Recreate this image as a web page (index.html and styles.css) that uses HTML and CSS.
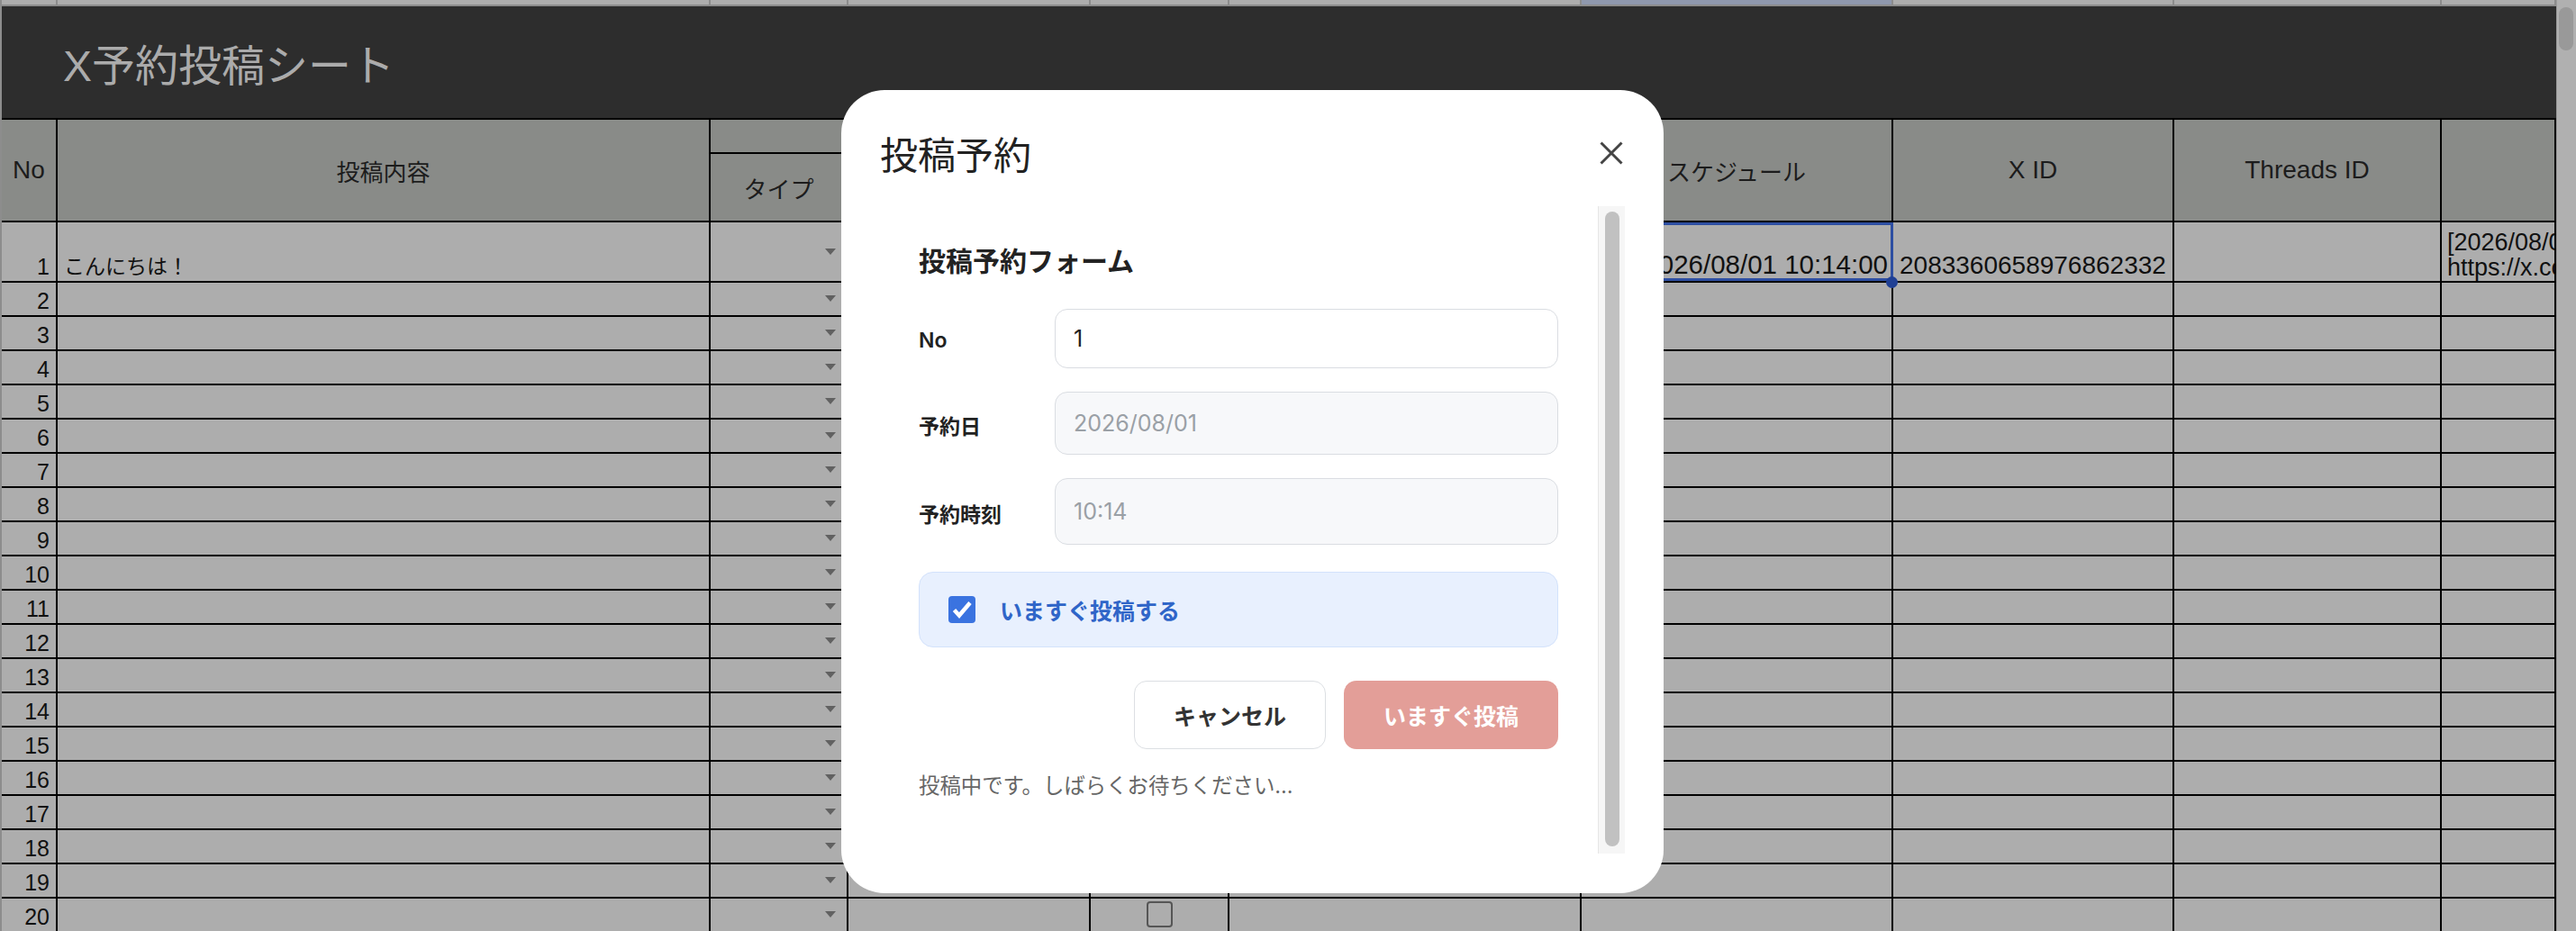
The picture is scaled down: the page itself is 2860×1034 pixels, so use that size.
FILE: index.html
```html
<!DOCTYPE html>
<html lang="ja">
<head>
    <meta charset="UTF-8">
    <meta name="viewport" content="width=device-width, initial-scale=1.0">
    <title>X予約投稿シート</title>
    <link rel="stylesheet" href="styles.css">
</head>
<body>
    <div class="app">
        <div class="sheet">
            <div class="strip grid">
                <span></span><span></span><span></span><span></span><span></span><span></span><span class="sel"></span><span></span><span></span><span></span>
            </div>
            <div class="titlebar">X予約投稿シート</div>

            <div class="head grid">
                <span class="h no">No</span>
                <span class="h body"><b class="ja">投稿内容</b></span>
                <span class="h group"></span>
                <span class="h type"><b class="ja">タイプ</b></span>
                <span class="h sub"></span>
                <span class="h c5"></span>
                <span class="h c6"></span>
                <span class="h c7"><b class="ja">スケジュール</b></span>
                <span class="h c8">X ID</span>
                <span class="h c9">Threads ID</span>
                <span class="h c10"></span>
            </div>

            <div class="row grid first">
                <span class="c num">1</span>
                <span class="c text"><b class="ja-s">こんにちは！</b></span>
                <span class="c type"><i class="dd"></i></span>
                <span class="c"></span>
                <span class="c chk"><i class="box"></i></span>
                <span class="c"></span>
                <span class="c date selected">2026/08/01 10:14:00</span>
                <span class="c text">2083360658976862332</span>
                <span class="c"></span>
                <span class="c log">[2026/08/01<br>https://x.com</span>
            </div>
            <div class="row grid"><span class="c num">2</span><span class="c"></span><span class="c type"><i class="dd"></i></span><span class="c"></span><span class="c chk"><i class="box"></i></span><span class="c"></span><span class="c"></span><span class="c"></span><span class="c"></span><span class="c"></span></div>
            <div class="row grid"><span class="c num">3</span><span class="c"></span><span class="c type"><i class="dd"></i></span><span class="c"></span><span class="c chk"><i class="box"></i></span><span class="c"></span><span class="c"></span><span class="c"></span><span class="c"></span><span class="c"></span></div>
            <div class="row grid"><span class="c num">4</span><span class="c"></span><span class="c type"><i class="dd"></i></span><span class="c"></span><span class="c chk"><i class="box"></i></span><span class="c"></span><span class="c"></span><span class="c"></span><span class="c"></span><span class="c"></span></div>
            <div class="row grid"><span class="c num">5</span><span class="c"></span><span class="c type"><i class="dd"></i></span><span class="c"></span><span class="c chk"><i class="box"></i></span><span class="c"></span><span class="c"></span><span class="c"></span><span class="c"></span><span class="c"></span></div>
            <div class="row grid"><span class="c num">6</span><span class="c"></span><span class="c type"><i class="dd"></i></span><span class="c"></span><span class="c chk"><i class="box"></i></span><span class="c"></span><span class="c"></span><span class="c"></span><span class="c"></span><span class="c"></span></div>
            <div class="row grid"><span class="c num">7</span><span class="c"></span><span class="c type"><i class="dd"></i></span><span class="c"></span><span class="c chk"><i class="box"></i></span><span class="c"></span><span class="c"></span><span class="c"></span><span class="c"></span><span class="c"></span></div>
            <div class="row grid"><span class="c num">8</span><span class="c"></span><span class="c type"><i class="dd"></i></span><span class="c"></span><span class="c chk"><i class="box"></i></span><span class="c"></span><span class="c"></span><span class="c"></span><span class="c"></span><span class="c"></span></div>
            <div class="row grid"><span class="c num">9</span><span class="c"></span><span class="c type"><i class="dd"></i></span><span class="c"></span><span class="c chk"><i class="box"></i></span><span class="c"></span><span class="c"></span><span class="c"></span><span class="c"></span><span class="c"></span></div>
            <div class="row grid"><span class="c num">10</span><span class="c"></span><span class="c type"><i class="dd"></i></span><span class="c"></span><span class="c chk"><i class="box"></i></span><span class="c"></span><span class="c"></span><span class="c"></span><span class="c"></span><span class="c"></span></div>
            <div class="row grid"><span class="c num">11</span><span class="c"></span><span class="c type"><i class="dd"></i></span><span class="c"></span><span class="c chk"><i class="box"></i></span><span class="c"></span><span class="c"></span><span class="c"></span><span class="c"></span><span class="c"></span></div>
            <div class="row grid"><span class="c num">12</span><span class="c"></span><span class="c type"><i class="dd"></i></span><span class="c"></span><span class="c chk"><i class="box"></i></span><span class="c"></span><span class="c"></span><span class="c"></span><span class="c"></span><span class="c"></span></div>
            <div class="row grid"><span class="c num">13</span><span class="c"></span><span class="c type"><i class="dd"></i></span><span class="c"></span><span class="c chk"><i class="box"></i></span><span class="c"></span><span class="c"></span><span class="c"></span><span class="c"></span><span class="c"></span></div>
            <div class="row grid"><span class="c num">14</span><span class="c"></span><span class="c type"><i class="dd"></i></span><span class="c"></span><span class="c chk"><i class="box"></i></span><span class="c"></span><span class="c"></span><span class="c"></span><span class="c"></span><span class="c"></span></div>
            <div class="row grid"><span class="c num">15</span><span class="c"></span><span class="c type"><i class="dd"></i></span><span class="c"></span><span class="c chk"><i class="box"></i></span><span class="c"></span><span class="c"></span><span class="c"></span><span class="c"></span><span class="c"></span></div>
            <div class="row grid"><span class="c num">16</span><span class="c"></span><span class="c type"><i class="dd"></i></span><span class="c"></span><span class="c chk"><i class="box"></i></span><span class="c"></span><span class="c"></span><span class="c"></span><span class="c"></span><span class="c"></span></div>
            <div class="row grid"><span class="c num">17</span><span class="c"></span><span class="c type"><i class="dd"></i></span><span class="c"></span><span class="c chk"><i class="box"></i></span><span class="c"></span><span class="c"></span><span class="c"></span><span class="c"></span><span class="c"></span></div>
            <div class="row grid"><span class="c num">18</span><span class="c"></span><span class="c type"><i class="dd"></i></span><span class="c"></span><span class="c chk"><i class="box"></i></span><span class="c"></span><span class="c"></span><span class="c"></span><span class="c"></span><span class="c"></span></div>
            <div class="row grid"><span class="c num">19</span><span class="c"></span><span class="c type"><i class="dd"></i></span><span class="c"></span><span class="c chk"><i class="box"></i></span><span class="c"></span><span class="c"></span><span class="c"></span><span class="c"></span><span class="c"></span></div>
            <div class="row grid"><span class="c num">20</span><span class="c"></span><span class="c type"><i class="dd"></i></span><span class="c"></span><span class="c chk"><i class="box"></i></span><span class="c"></span><span class="c"></span><span class="c"></span><span class="c"></span><span class="c"></span></div>
        </div>
        <div class="vbar"><span class="vthumb"></span></div>
    </div>

    <!-- 投稿予約ダイアログ -->
    <div class="modal">
        <div class="modal-head">
            <h2>投稿予約</h2>
            <button class="close" type="button">
                <svg width="26" height="26" viewBox="0 0 26 26"><path d="M1.5 1.5L24.5 24.5M24.5 1.5L1.5 24.5" stroke="#444" stroke-width="3" fill="none"/></svg>
            </button>
        </div>
        <div class="modal-body">
            <div class="form">
                <h3>投稿予約フォーム</h3>
                <div class="field">
                    <label>No</label>
                    <input class="in h66" type="text" value="1">
                </div>
                <div class="field">
                    <label>予約日</label>
                    <input class="in h70 ro" type="text" value="2026/08/01" readonly>
                </div>
                <div class="field last">
                    <label>予約時刻</label>
                    <input class="in h74 ro" type="text" value="10:14" readonly>
                </div>
                <label class="now">
                    <span class="check"><svg width="30" height="30" viewBox="0 0 30 30"><path d="M6.5 15.5L12 21.5L24 7.5" stroke="#fff" stroke-width="4.5" fill="none"/></svg></span>
                    いますぐ投稿する
                </label>
                <div class="actions">
                    <button class="btn" type="button">キャンセル</button>
                    <button class="btn primary" type="button">いますぐ投稿</button>
                </div>
                <p class="status">投稿中です。しばらくお待ちください...</p>
            </div>
            <div class="mscroll"><span class="mthumb"></span></div>
        </div>
    </div>
</body>
</html>
```

FILE: styles.css
```css
*{
    margin: 0;
    padding: 0;
    box-sizing: border-box;
}
body {
    width: 2860px;
    height: 1034px;
    overflow: hidden;
    font-family: "Liberation Sans", "Noto Sans CJK JP", sans-serif;
    color: #111;
    background: #adadad;
}

.app {
    display: flex;
    height: 1034px;
}
.sheet {
    width: 2838px;
    border-left: 2px solid #8d8d8d;
    background: #adadad;
}

.grid {
    display: grid;
    grid-template-columns: 62px 725px 153px 269px 154px 391px 346px 312px 297px 1fr;
}

/* top strip (previous row) */
.strip {
    height: 7px;
    border-bottom: 2px solid #8c8c8c;
}
.strip span {
    border-right: 2px solid #8c8c8c;
}
.strip .sel {
    background: #8f98ad;
}

.titlebar {
    height: 124px;
    background: #2d2d2d;
    color: #ababab;
    font-size: 48px;
    padding-left: 68px;
    display: flex;
    align-items: center;
}

/* header */
.head {
    grid-template-rows: 38px 74px;
    background: #898b88;
    border-top: 2px solid #000;
    border-bottom: 2px solid #000;
    font-size: 28px;
    color: #1c1c1c;
}
.h {
    border-right: 2px solid #000;
    display: flex;
    align-items: center;
    justify-content: center;
    grid-row: 1 / 3;
}
.h.group {
    grid-column: 3 / 5;
    grid-row: 1;
    border-bottom: 2px solid #000;
}
.h.type { grid-column: 3; grid-row: 2; }
.h.sub { grid-column: 4; grid-row: 2; }
.ja {
    font-weight: normal;
    font-size: 26px;
}
.ja-s {
    font-weight: normal;
    font-size: 23px;
}

/* rows */
.row {
    height: 38px;
    border-bottom: 2px solid #000;
    font-size: 28px;
}
.row.first {
    height: 67px;
}
.c {
    border-right: 2px solid #000;
    display: flex;
    align-items: flex-end;
    padding-bottom: 1px;
    overflow: hidden;
    white-space: nowrap;
    min-width: 0;
}
.c.num {
    justify-content: flex-end;
    padding-right: 7px;
    font-size: 25px;
}
.c.text {
    padding-left: 7px;
}
.c.type {
    align-items: center;
    justify-content: flex-end;
    padding-right: 12px;
}
.dd {
    border-left: 6px solid transparent;
    border-right: 6px solid transparent;
    border-top: 7px solid #616161;
}
.c.chk {
    align-items: center;
    justify-content: center;
}
.box {
    width: 29px;
    height: 29px;
    border: 2.5px solid #555;
    border-radius: 4px;
}
.c.date {
    justify-content: flex-end;
    padding-right: 4px;
    font-size: 29.5px;
    overflow: visible;
}
.c.selected {
    position: relative;
    outline: 3px solid #2d4ea2;
    outline-offset: -3px;
}
.c.selected::after {
    content: "";
    position: absolute;
    right: -7px;
    bottom: -8px;
    width: 13px;
    height: 13px;
    border-radius: 50%;
    background: #1f3f94;
}
.c.log {
    display: block;
    padding: 8px 0 0 6px;
    line-height: 28px;
    font-size: 27px;
}

/* right scrollbar */
.vbar {
    width: 22px;
    background: #b0b0b0;
    border-left: 1px solid #9a9a9a;
    padding: 8px 3px 0 2px;
}
.vthumb {
    display: block;
    height: 48px;
    border-radius: 8px;
    background: #999;
}

/* modal */
.modal {
    position: absolute;
    left: 934px;
    top: 100px;
    width: 913px;
    height: 892px;
    background: #fff;
    border-radius: 48px;
    padding: 43px 43px 44px;
    display: flex;
    flex-direction: column;
    font-family: Inter, "Noto Sans CJK JP", sans-serif;
    color: #222;
}
.modal-head {
    height: 54px;
    margin-bottom: 32px;
    display: flex;
    align-items: center;
    justify-content: space-between;
}
.modal-head h2 {
    font-size: 42px;
    font-weight: 400;
    line-height: 54px;
    font-family: "Noto Sans CJK JP", sans-serif;
}
.close {
    border: 0;
    background: none;
    width: 26px;
    height: 26px;
    margin-right: 2px;
    display: flex;
}

.modal-body {
    flex: 1;
    display: flex;
    min-height: 0;
}
.form {
    flex: 1;
    padding: 40px 44px 0 43px;
    overflow: hidden;
}
.mscroll {
    width: 30px;
    background: #f6f6f6;
    border-left: 1px solid #e6e6e6;
    padding: 6px 6px 8px 7px;
}
.mthumb {
    display: block;
    height: 100%;
    border-radius: 8px;
    background: #c1c1c1;
}

.form h3 {
    font-size: 30px;
    font-weight: 700;
    line-height: 42px;
    margin-bottom: 32px;
}
.field {
    display: flex;
    align-items: center;
    margin-bottom: 26px;
}
.field.last {
    margin-bottom: 30px;
}
.field label {
    width: 151px;
    flex: none;
    font-size: 23px;
    font-weight: 600;
    padding-top: 3px;
}
.in {
    flex: 1;
    min-width: 0;
    border: 1.5px solid #dadde2;
    border-radius: 14px;
    padding: 0 20px;
    font-family: Inter, "Noto Sans CJK JP", sans-serif;
    font-size: 25px;
    color: #222;
    background: #fff;
    outline: none;
}
.in.ro {
    background: #f7f8fa;
    color: #9aa0a6;
}
.h66 { height: 66px; }
.h70 { height: 70px; }
.h74 { height: 74px; }

.now {
    height: 84px;
    display: flex;
    align-items: center;
    gap: 27px;
    padding-left: 32px;
    background: #e8f0fe;
    border: 1.5px solid #d3e2fb;
    border-radius: 16px;
    color: #2f65c8;
    font-size: 25px;
    font-weight: 700;
    margin-bottom: 37px;
}
.check {
    width: 30px;
    height: 30px;
    border-radius: 4px;
    background: #3a73e0;
    display: flex;
}

.actions {
    display: flex;
    justify-content: flex-end;
    gap: 20px;
    margin-bottom: 25px;
}
.btn {
    height: 76px;
    padding: 0 43px;
    border-radius: 14px;
    border: 1.5px solid #dcdfe3;
    background: #fff;
    color: #333;
    font-family: "Noto Sans CJK JP", sans-serif;
    font-size: 25px;
    font-weight: 700;
}
.btn.primary {
    border: 0;
    padding: 0 44px;
    background: #e39e98;
    color: #fff;
}
.status {
    font-size: 23.4px;
    line-height: 32px;
    color: #666;
}
```
